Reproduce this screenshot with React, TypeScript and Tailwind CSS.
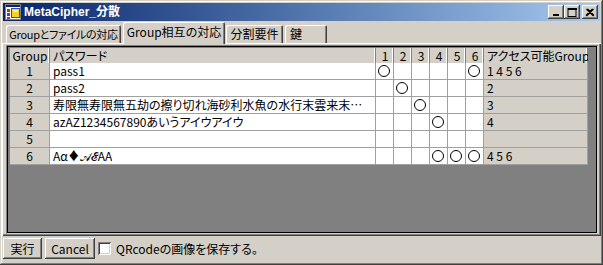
import React from "react";

const FONT = {
  fontFamily: '"Noto Sans CJK JP", "Liberation Sans", sans-serif',
  fontFeatureSettings: '"palt"',
};
const TITLE_FONT = { fontFamily: '"Liberation Sans", "Noto Sans CJK JP", sans-serif' };

type Row = { g: string; pw: string; marks: number[]; acc: string };

const rows: Row[] = [
  { g: "1", pw: "pass1", marks: [1, 0, 0, 0, 0, 1], acc: "1 4 5 6" },
  { g: "2", pw: "pass2", marks: [0, 1, 0, 0, 0, 0], acc: "2" },
  {
    g: "3",
    pw: "寿限無寿限無五劫の擦り切れ海砂利水魚の水行末雲来末風来末風来末食う寝る処に住む処",
    marks: [0, 0, 1, 0, 0, 0],
    acc: "3",
  },
  { g: "4", pw: "azAZ1234567890あいうアイウアイウ", marks: [0, 0, 0, 1, 0, 0], acc: "4" },
  { g: "5", pw: "", marks: [0, 0, 0, 0, 0, 0], acc: "" },
  { g: "6", pw: "Aα♦𝒜ℰAA", marks: [0, 0, 0, 1, 1, 1], acc: "4 5 6" },
];

function AppIcon() {
  return (
    <svg width="16" height="16" viewBox="0 0 16 16" className="shrink-0">
      <rect x="0.5" y="0.5" width="15" height="15" fill="#fff" stroke="#808080" />
      <rect x="1" y="1" width="14" height="2" fill="#0A246A" />
      <rect x="2" y="5" width="3" height="3" fill="#E02020" />
      <rect x="2" y="9" width="3" height="3" fill="#2050D0" />
      <rect x="2" y="13" width="3" height="2" fill="#E02020" />
      <rect x="6.5" y="4.5" width="8" height="9" fill="#F8D020" stroke="#2050D0" />
      <rect x="8" y="6" width="5" height="2" fill="#FFF080" />
    </svg>
  );
}

function CaptionButton({ kind }: { kind: "min" | "max" | "close" }) {
  return (
    <div className="w-[16px] h-[14px] bg-[#D4D0C8] shadow-[inset_-1px_-1px_#404040,inset_1px_1px_#fff,inset_-2px_-2px_#808080] flex items-center justify-center">
      <svg width="10" height="9" viewBox="0 0 10 9">
        {kind === "min" && <rect x="2" y="6" width="6" height="2" fill="#000" />}
        {kind === "max" && (
          <>
            <rect x="1" y="0.5" width="8" height="8" fill="none" stroke="#000" />
            <rect x="1" y="0" width="9" height="2" fill="#000" />
          </>
        )}
        {kind === "close" && (
          <path d="M1.5 1 L8.5 8 M8.5 1 L1.5 8 M2.5 1 L9 7.5 M7.5 1 L1 7.5" stroke="#000" strokeWidth="1.3" />
        )}
      </svg>
    </div>
  );
}

function Circle() {
  return <div className="w-[12px] h-[12px] rounded-full border border-black bg-white" />;
}

const COLS = [40, 326, 18, 18, 18, 18, 18, 18, 104];

export default function App() {
  return (
    <div
      className="w-[603px] h-[265px] bg-[#D4D0C8] shadow-[inset_-1px_-1px_#404040,inset_1px_1px_#D4D0C8,inset_-2px_-2px_#808080,inset_2px_2px_#fff] flex flex-col text-[12px] text-black overflow-hidden"
      style={FONT}
    >
      {/* Title bar */}
      <div className="mx-[3px] mt-[3px] h-[18px] bg-linear-to-r from-[#0A246A] to-[#A6CAF0] flex items-center pl-[2px] pr-[2px]">
        <AppIcon />
        <div className="ml-[3px] text-white font-bold text-[12px] leading-none whitespace-nowrap" style={TITLE_FONT}>
          MetaCipher_分散
        </div>
        <div className="flex-1" />
        <div className="flex items-center">
          <CaptionButton kind="min" />
          <CaptionButton kind="max" />
          <div className="w-[2px]" />
          <CaptionButton kind="close" />
        </div>
      </div>

      {/* Tabs */}
      <div className="h-[22px] flex items-end relative z-10">
        <div className="ml-[6px] w-[115px] h-[18px] rounded-t-[2px] shadow-[inset_1px_1px_#fff,inset_-1px_0_#404040,inset_-2px_0_#808080] flex items-center justify-center whitespace-nowrap leading-none text-[11px] tracking-[-0.3px] overflow-hidden">
          Groupとファイルの対応
        </div>
        <div className="ml-[2px] w-[102px] h-[22px] -mb-[1px] bg-[#D4D0C8] rounded-t-[2px] shadow-[inset_1px_1px_#fff,inset_-1px_0_#404040,inset_-2px_0_#808080] flex items-start pt-[4px] justify-center whitespace-nowrap leading-none">
          Group相互の対応
        </div>
        <div className="ml-[1px] w-[57px] h-[18px] rounded-t-[2px] shadow-[inset_1px_1px_#fff,inset_-1px_0_#404040,inset_-2px_0_#808080] flex items-center justify-center whitespace-nowrap leading-none">
          分割要件
        </div>
        <div className="ml-[2px] w-[42px] h-[18px] rounded-t-[2px] shadow-[inset_1px_1px_#fff,inset_-1px_0_#404040,inset_-2px_0_#808080] flex items-center pl-[5px] whitespace-nowrap leading-none">
          鍵
        </div>
      </div>

      {/* Tab page */}
      <div className="mx-[2px] h-[193px] shrink-0 shadow-[inset_1px_1px_#fff,inset_-1px_-1px_#404040,inset_-2px_-2px_#808080] pl-[4px] pr-[3px] pt-[2px] pb-[2px] flex">
        <div className="flex-1 shadow-[inset_1px_1px_#808080,inset_-1px_-1px_#D4D0C8] p-[1px] flex">
          <div className="flex-1 border border-black bg-[#808080] pt-[1px] pl-[2px]">
            {/* Header */}
            <div className="flex h-[15px]">
              {COLS.map((w, i) => {
                const label =
                  i === 0 ? "Group" : i === 1 ? "パスワード" : i === 8 ? "アクセス可能Group" : String(i - 1);
                const align = i === 1 || i === 8 ? "justify-start pl-[3px]" : "justify-center";
                return (
                  <div
                    key={i}
                    style={{ width: w }}
                    className={`h-[15px] bg-[#D4D0C8] shadow-[inset_-1px_0_#808080,inset_-2px_0_#fff] flex items-center ${align} whitespace-nowrap overflow-hidden leading-none`}
                  >
                    {label}
                  </div>
                );
              })}
            </div>
            {rows.map((r) => (
              <div key={r.g} className="flex h-[17px]">
                <div className="w-[40px] h-[17px] bg-[#D4D0C8] border-r border-b border-[#A0A0A0] flex items-center justify-center leading-none">
                  {r.g}
                </div>
                <div className="w-[326px] h-[17px] bg-white border-r border-b border-[#A0A0A0] flex items-center pl-[3px] pr-[10px] leading-none overflow-hidden">
                  <span className="truncate block leading-[16px]">{r.pw}</span>
                </div>
                {r.marks.map((m, j) => (
                  <div
                    key={j}
                    className="w-[18px] h-[17px] bg-white border-r border-b border-[#A0A0A0] flex items-center pl-[2px]"
                  >
                    {m ? <Circle /> : null}
                  </div>
                ))}
                <div className="w-[104px] h-[17px] bg-[#D4D0C8] border-r border-b border-[#A0A0A0] flex items-center pl-[3px] leading-none whitespace-pre">
                  {r.acc}
                </div>
              </div>
            ))}
          </div>
        </div>
      </div>

      {/* Bottom bar */}
      <div className="flex items-center pl-[3px] pt-[2px] gap-[3px]">
        <div className="w-[39px] h-[21px] shadow-[inset_-1px_-1px_#404040,inset_1px_1px_#fff,inset_-2px_-2px_#808080] flex items-center justify-center leading-none">
          実行
        </div>
        <div className="w-[50px] h-[21px] shadow-[inset_-1px_-1px_#404040,inset_1px_1px_#fff,inset_-2px_-2px_#808080] flex items-center justify-center leading-none">
          Cancel
        </div>
        <div className="w-[13px] h-[13px] bg-white shadow-[inset_1px_1px_#808080,inset_-1px_-1px_#fff,inset_2px_2px_#404040,inset_-2px_-2px_#D4D0C8]" />
        <div className="ml-[2px] leading-none whitespace-nowrap">QRcodeの画像を保存する。</div>
      </div>
    </div>
  );
}
